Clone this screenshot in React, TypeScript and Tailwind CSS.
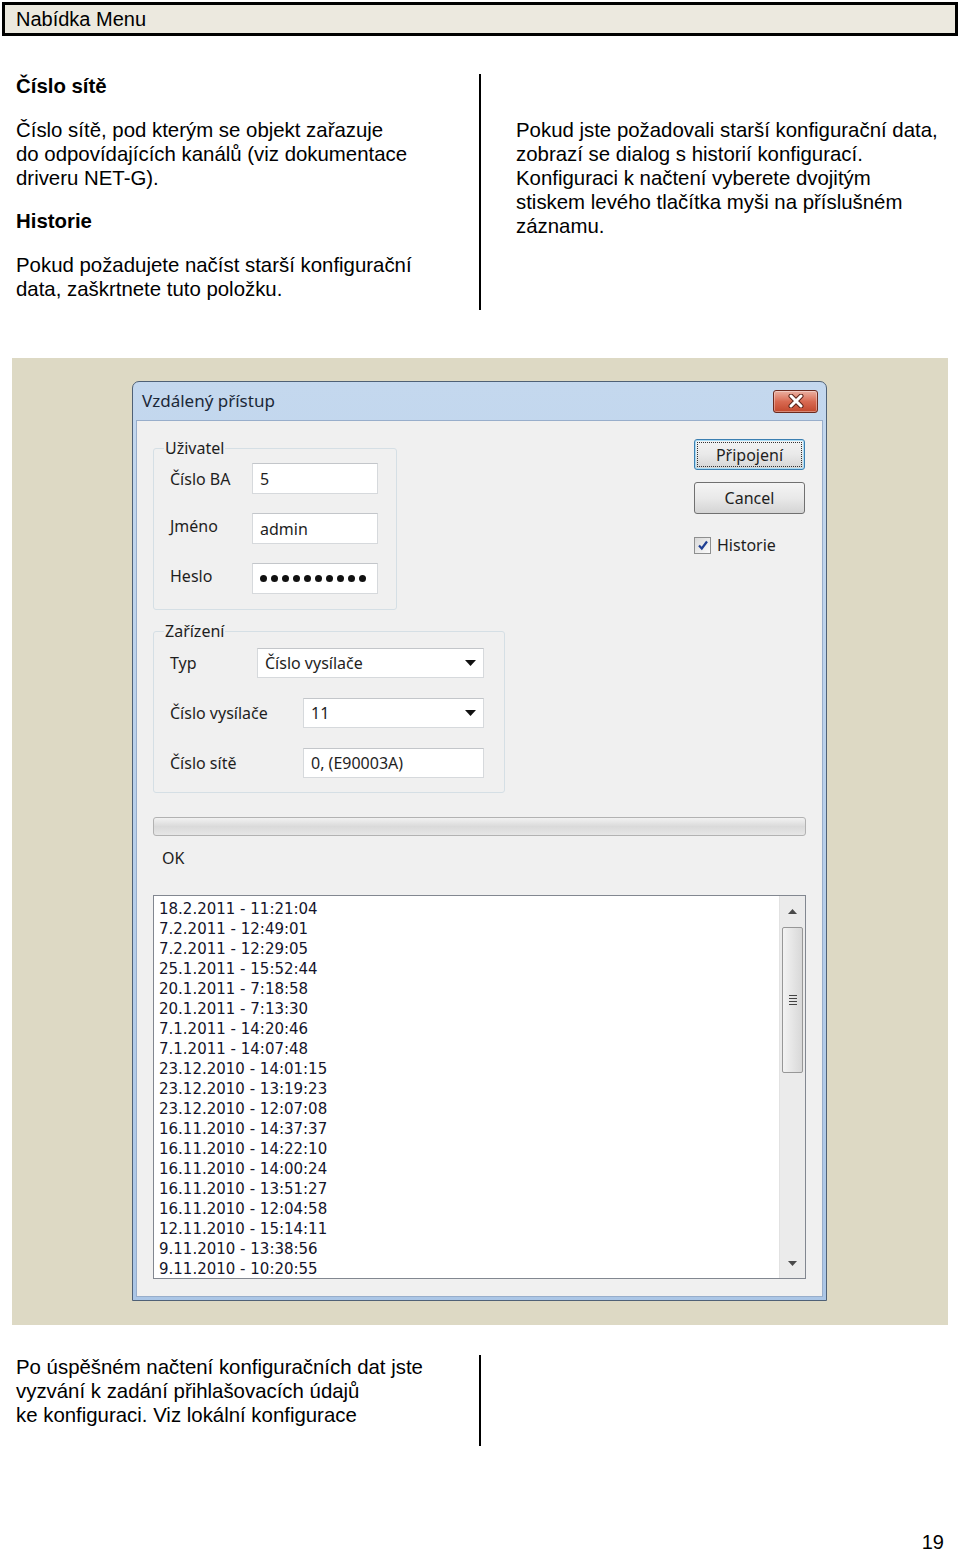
import React from 'react';

const history = [
  '18.2.2011 - 11:21:04',
  '7.2.2011 - 12:49:01',
  '7.2.2011 - 12:29:05',
  '25.1.2011 - 15:52:44',
  '20.1.2011 - 7:18:58',
  '20.1.2011 - 7:13:30',
  '7.1.2011 - 14:20:46',
  '7.1.2011 - 14:07:48',
  '23.12.2010 - 14:01:15',
  '23.12.2010 - 13:19:23',
  '23.12.2010 - 12:07:08',
  '16.11.2010 - 14:37:37',
  '16.11.2010 - 14:22:10',
  '16.11.2010 - 14:00:24',
  '16.11.2010 - 13:51:27',
  '16.11.2010 - 12:04:58',
  '12.11.2010 - 15:14:11',
  '9.11.2010 - 13:38:56',
  '9.11.2010 - 10:20:55',
];

function Field({ className, children }: { className: string; children?: React.ReactNode }) {
  return (
    <div className={`${className} border border-[#d6d9dc] border-t-[#c3c6ca] bg-white pl-[7px] flex items-center`}>
      {children}
    </div>
  );
}

function Combo({ className, value }: { className: string; value: string }) {
  return (
    <div className={`${className} border border-[#d6d9dc] border-t-[#c3c6ca] bg-white pl-[7px] pr-[7px] flex items-center justify-between`}>
      <span>{value}</span>
      <svg width="11" height="6" viewBox="0 0 11 6">
        <polygon points="0,0 11,0 5.5,6" fill="#111" />
      </svg>
    </div>
  );
}

function CloseButton() {
  return (
    <div className="w-[45px] h-[23px] rounded-[3px] border border-[#6b2a1f] bg-linear-to-b from-[#eab0a2] via-[#d86a52] to-[#c2472c] flex items-center justify-center shadow-[inset_0_0_0_1px_rgba(255,255,255,0.35)]">
      <svg width="18" height="14" viewBox="0 0 18 14">
        <path d="M4 2 L14 12 M14 2 L4 12" stroke="#5a2318" strokeWidth="5" strokeLinecap="round" />
        <path d="M4 2 L14 12 M14 2 L4 12" stroke="#ffffff" strokeWidth="3" strokeLinecap="round" />
      </svg>
    </div>
  );
}

function Scrollbar() {
  return (
    <div className="w-[26px] bg-[#ebebeb] border-l border-[#e2e2e2] flex flex-col items-center">
      <div className="h-[30px] flex items-center justify-center">
        <svg width="9" height="5" viewBox="0 0 9 5">
          <polygon points="0,5 4.5,0 9,5" fill="#4a4a4a" />
        </svg>
      </div>
      <div className="w-[21px] h-[146px] mt-[1px] rounded-[2px] border border-[#979797] bg-linear-to-r from-[#f3f3f3] to-[#d8d8d8] flex flex-col items-center justify-center gap-[2px]">
        <div className="w-[8px] h-[1px] bg-[#444]" />
        <div className="w-[8px] h-[1px] bg-[#444]" />
        <div className="w-[8px] h-[1px] bg-[#444]" />
        <div className="w-[8px] h-[1px] bg-[#444]" />
      </div>
      <div className="flex-1" />
      <div className="h-[30px] flex items-center justify-center">
        <svg width="9" height="5" viewBox="0 0 9 5">
          <polygon points="0,0 9,0 4.5,5" fill="#4a4a4a" />
        </svg>
      </div>
    </div>
  );
}

function Dialog() {
  return (
    <div className="w-[695px] h-[920px] flex flex-col rounded-t-[7px] border border-[#4f6176] bg-linear-to-b from-[#c4d8ee] to-[#abc6e6] font-['Noto_Sans','Open_Sans',sans-serif] text-[16px] text-[#1e1e1e]">
      <div className="h-[38px] flex items-center justify-between pl-[9px] pr-[8px]">
        <span className="text-[17px] text-[#1b2838]">Vzdálený přístup</span>
        <CloseButton />
      </div>

      <div className="mx-[3px] mb-[3px] flex-1 bg-[#f0f0f0] border border-[#98aecb] px-[16px] pt-[17px] flex flex-col">
        <div className="flex justify-between">
          <div className="flex flex-col gap-[11px]">
            <fieldset className="w-[244px] border border-[#d5dfe5] rounded-[3px] pl-[16px] pr-[17px] pt-[5px] pb-[15px]">
              <legend className="-ml-[6px] px-[1px] leading-[20px]">Uživatel</legend>
              <div className="flex flex-col gap-[19px]">
                <div className="flex items-center">
                  <span className="w-[82px]">Číslo BA</span>
                  <Field className="w-[126px] h-[31px]">5</Field>
                </div>
                <div className="flex items-center">
                  <span className="w-[82px] -mt-[6px]">Jméno</span>
                  <Field className="w-[126px] h-[31px]">admin</Field>
                </div>
                <div className="flex items-center">
                  <span className="w-[82px] -mt-[6px]">Heslo</span>
                  <Field className="w-[126px] h-[31px]">
                    <div className="flex gap-[4px]">
                      {Array.from({ length: 10 }).map((_, i) => (
                        <div key={i} className="w-[7px] h-[7px] rounded-full bg-[#111]" />
                      ))}
                    </div>
                  </Field>
                </div>
              </div>
            </fieldset>

            <fieldset className="w-[352px] border border-[#d5dfe5] rounded-[3px] pl-[16px] pr-[20px] pt-[7px] pb-[14px]">
              <legend className="-ml-[6px] px-[1px] leading-[20px]">Zařízení</legend>
              <div className="flex flex-col gap-[20px]">
                <div className="flex items-center">
                  <span className="w-[87px]">Typ</span>
                  <Combo className="w-[227px] h-[30px]" value="Číslo vysílače" />
                </div>
                <div className="flex items-center">
                  <span className="w-[133px]">Číslo vysílače</span>
                  <Combo className="w-[181px] h-[30px]" value="11" />
                </div>
                <div className="flex items-center">
                  <span className="w-[133px]">Číslo sítě</span>
                  <Field className="w-[181px] h-[30px]">0, (E90003A)</Field>
                </div>
              </div>
            </fieldset>
          </div>

          <div className="w-[111px] mr-[1px] mt-[1px] flex flex-col">
            <button className="h-[31px] rounded-[3px] border border-[#3c7fb1] bg-linear-to-b from-[#f4f4f4] via-[#e9e9e9] to-[#d4d4d4] p-[2px] shadow-[inset_0_0_0_1px_#a8dcf6]">
              <div className="h-full border border-dotted border-[#333] flex items-center justify-center">Připojení</div>
            </button>
            <button className="mt-[12px] h-[32px] rounded-[3px] border border-[#707070] bg-linear-to-b from-[#f4f4f4] via-[#e9e9e9] to-[#d4d4d4] flex items-center justify-center">
              Cancel
            </button>
            <label className="mt-[21px] h-[20px] flex items-center gap-[6px]">
              <span className="w-[17px] h-[17px] border border-[#8e8f8f] bg-linear-to-br from-[#d9d9d9] to-[#fbfbfb] flex items-center justify-center">
                <svg width="12" height="12" viewBox="0 0 12 12">
                  <path d="M2 6.5 L4.8 9.5 L10 2.5" stroke="#1f3f93" strokeWidth="2.2" fill="none" />
                </svg>
              </span>
              <span>Historie</span>
            </label>
          </div>
        </div>

        <div className="mt-[24px] h-[19px] rounded-[3px] border border-[#b2b2b2] bg-linear-to-b from-[#f2f2f2] via-[#dadada] to-[#e6e6e6]" />

        <div className="mt-[12px] pl-[9px] leading-[20px]">OK</div>

        <div className="mt-[27px] h-[384px] border border-[#828790] bg-white flex overflow-hidden">
          <div className="flex-1 pt-[3px] pl-[5px] font-['DejaVu_Sans',sans-serif] text-[15px] leading-[20px] text-[#14142a]">
            {history.map((h) => (
              <div key={h}>{h}</div>
            ))}
          </div>
          <Scrollbar />
        </div>
      </div>
    </div>
  );
}

export default function App() {
  return (
    <div className="w-[960px] h-[1554px] bg-white text-black font-['Liberation_Sans',Arial,sans-serif] overflow-hidden">
      <div className="mx-[2px] mt-[2px] h-[34px] border-[3px] border-black bg-[#ece9df] pl-[11px] flex items-center text-[20px] leading-none">
        Nabídka Menu
      </div>

      <div className="mt-[38px] flex h-[236px]">
        <div className="w-[479px] pl-[16px] text-[20.4px] leading-[24px]">
          <h2 className="font-bold">Číslo sítě</h2>
          <p className="mt-[20px]">
            Číslo sítě, pod kterým se objekt zařazuje
            <br />
            do odpovídajících kanálů (viz dokumentace
            <br />
            driveru NET-G).
          </p>
          <h2 className="mt-[19px] font-bold">Historie</h2>
          <p className="mt-[20px]">
            Pokud požadujete načíst starší konfigurační
            <br />
            data, zaškrtnete tuto položku.
          </p>
        </div>
        <div className="w-[2px] bg-black" />
        <div className="pl-[35px] pt-[44px] text-[20.4px] leading-[24px]">
          Pokud jste požadovali starší konfigurační data,
          <br />
          zobrazí se dialog s historií konfigurací.
          <br />
          Konfiguraci k načtení vyberete dvojitým
          <br />
          stiskem levého tlačítka myši na příslušném
          <br />
          záznamu.
        </div>
      </div>

      <div className="mx-[12px] mt-[48px] h-[967px] bg-[#ddd9c4] pt-[23px] pl-[120px]">
        <Dialog />
      </div>

      <div className="mt-[30px] flex h-[91px]">
        <div className="w-[479px] pl-[16px] text-[20.4px] leading-[24px]">
          Po úspěšném načtení konfiguračních dat jste
          <br />
          vyzvání k zadání přihlašovacích údajů
          <br />
          ke konfiguraci. Viz lokální konfigurace
        </div>
        <div className="w-[2px] bg-black" />
      </div>

      <div className="mt-[86px] pr-[16px] text-right text-[20px] leading-[20px]">19</div>
    </div>
  );
}
